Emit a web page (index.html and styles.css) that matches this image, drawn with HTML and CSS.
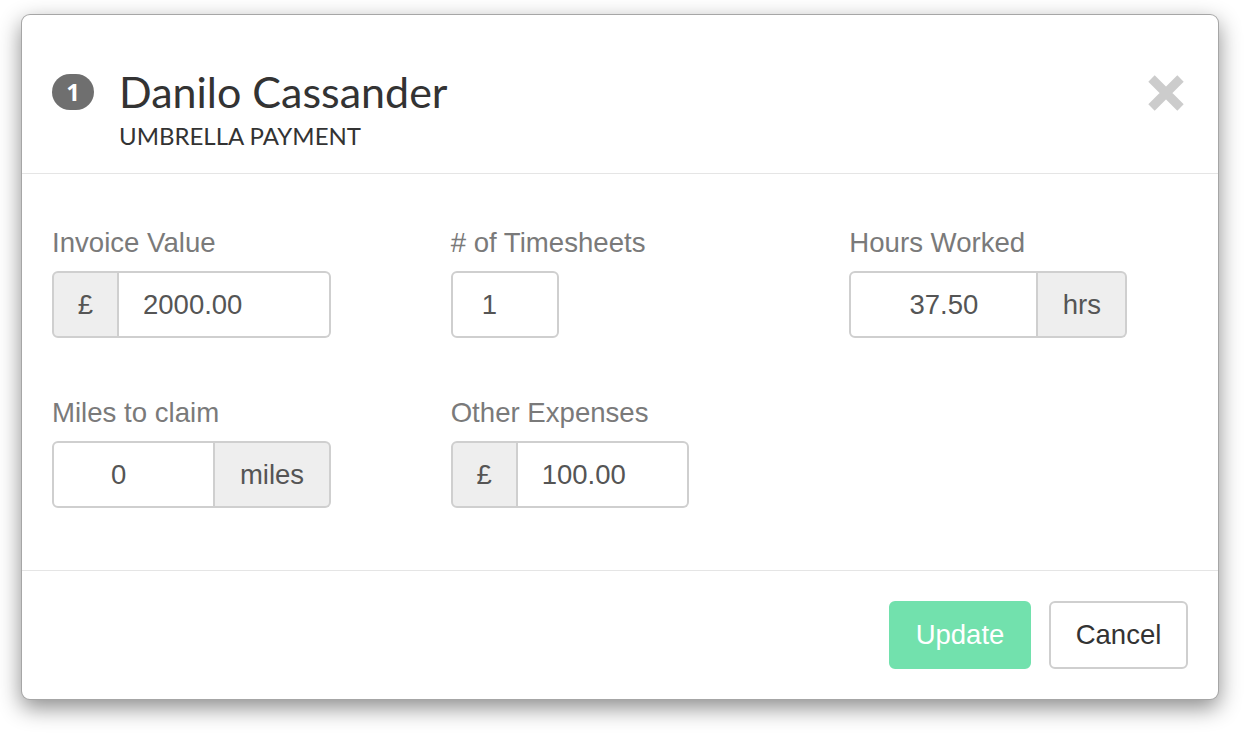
FILE: index.html
```html
<!DOCTYPE html>
<html>
<head>
<meta charset="utf-8">
<link rel="stylesheet" href="styles.css">
</head>
<body>
<div class="modal">
  <div class="modal-header">
    <span class="badge">1</span>
    <div class="titles">
      <h1 class="title">Danilo Cassander</h1>
      <div class="subtitle">UMBRELLA PAYMENT</div>
    </div>
    <button class="close" aria-label="Close">
      <svg width="36" height="36" viewBox="0 0 36 36"><path d="M3.5 3.5 L32.5 32.5 M32.5 3.5 L3.5 32.5" stroke="#cccccc" stroke-width="9" fill="none"/></svg>
    </button>
  </div>
  <div class="modal-body">
    <div class="grid">
      <div class="field">
        <label class="label">Invoice Value</label>
        <div class="group w-invoice">
          <span class="addon addon-left">£</span>
          <input class="input pad-left" type="text" value="2000.00">
        </div>
      </div>
      <div class="field">
        <label class="label"># of Timesheets</label>
        <div class="group w-timesheets">
          <input class="input solo pad-ts" type="text" value="1">
        </div>
      </div>
      <div class="field">
        <label class="label">Hours Worked</label>
        <div class="group w-hours">
          <input class="input centered" type="text" value="37.50">
          <span class="addon addon-right w-hrs">hrs</span>
        </div>
      </div>
      <div class="field">
        <label class="label">Miles to claim</label>
        <div class="group w-miles">
          <input class="input pad-miles" type="text" value="0">
          <span class="addon addon-right w-milesaddon">miles</span>
        </div>
      </div>
      <div class="field">
        <label class="label">Other Expenses</label>
        <div class="group w-other">
          <span class="addon addon-left">£</span>
          <input class="input pad-left" type="text" value="100.00">
        </div>
      </div>
    </div>
  </div>
  <div class="modal-footer">
    <button class="btn btn-update">Update</button>
    <button class="btn btn-cancel">Cancel</button>
  </div>
</div>
</body>
</html>
```
FILE: styles.css
```css
html, body {
  margin: 0;
  padding: 0;
  background: #ffffff;
}
body {
  font-family: "Liberation Sans", Arial, sans-serif;
  min-height: 733px;
  overflow: hidden;
}
.modal {
  margin: 14px 0 0 21px;
  width: 1198px;
  box-sizing: border-box;
  background: #fff;
  border: 1px solid rgba(0,0,0,0.35);
  border-radius: 9px;
  box-shadow: 0 8px 22px rgba(0,0,0,0.45);
}
.modal-header {
  display: flex;
  align-items: flex-start;
  padding: 58px 33px 0 30px;
  height: 159px;
  box-sizing: border-box;
  border-bottom: 1px solid #e5e5e5;
}
.badge {
  flex: none;
  width: 42px;
  height: 36px;
  border-radius: 18px;
  background: #6f6f6f;
  color: #fff;
  font-family: "Open Sans", sans-serif;
  font-weight: 700;
  font-size: 24px;
  line-height: 36px;
  text-align: center;
  margin-top: 1px;
}
.titles {
  flex: 1;
  margin-left: 25px;
}
.title {
  margin: 0;
  font-family: "Lato", sans-serif;
  font-weight: 400;
  font-size: 43px;
  line-height: 38px;
  color: #333;
}
.subtitle {
  margin-top: 12px;
  font-family: "Lato", sans-serif;
  font-size: 24px;
  line-height: 26px;
  color: #333;
}
.close {
  flex: none;
  background: none;
  border: 0;
  padding: 0;
  margin-top: 2px;
  margin-right: 1px;
  width: 36px;
  height: 36px;
  cursor: pointer;
}
.close svg { display: block; }
.modal-body {
  padding: 50px 0 6px 0;
}
.grid {
  display: grid;
  grid-template-columns: repeat(3, 1fr);
}
.field {
  padding: 0 30px;
  margin-bottom: 56px;
}
.label {
  display: block;
  font-size: 27.6px;
  line-height: 38px;
  color: #7a7a7a;
  margin-bottom: 9px;
}
.group {
  display: flex;
  height: 67px;
}
.w-invoice { width: 279px; }
.w-timesheets { width: 108px; }
.w-hours { width: 278px; }
.w-miles { width: 279px; }
.w-other { width: 238px; }
.addon {
  flex: none;
  box-sizing: border-box;
  height: 67px;
  background: #eeeeee;
  border: 2px solid #cfcfcf;
  color: #555;
  font-size: 27.5px;
  line-height: 63px;
  text-align: center;
}
.addon-left {
  width: 67px;
  border-radius: 6px 0 0 6px;
}
.addon-left + .input {
  border-left: 0;
  border-radius: 0 6px 6px 0;
}
.addon-right {
  border-left: 0;
  border-radius: 0 6px 6px 0;
}
.w-hrs { width: 89px; }
.w-milesaddon { width: 116px; }
.input {
  flex: 1;
  min-width: 0;
  box-sizing: border-box;
  height: 67px;
  border: 2px solid #cfcfcf;
  border-radius: 6px 0 0 6px;
  background: #fff;
  color: #555;
  font-family: "Liberation Sans", Arial, sans-serif;
  font-size: 27.5px;
  padding: 0 10px 0 24px;
  outline: none;
}
.input.solo { border-radius: 6px; }
.pad-ts { padding-left: 29px; }
.pad-miles { padding-left: 57px; }
.centered { text-align: center; padding: 0 10px; }
.modal-footer {
  display: flex;
  justify-content: flex-end;
  gap: 18px;
  padding: 30px 30px 30px 30px;
  border-top: 1px solid #e5e5e5;
}
.btn {
  height: 68px;
  box-sizing: border-box;
  font-family: "Liberation Sans", Arial, sans-serif;
  font-size: 27.5px;
  border-radius: 6px;
  cursor: pointer;
}
.btn-update {
  width: 142px;
  background: #72e1ad;
  border: 2px solid #72e1ad;
  color: #fff;
}
.btn-cancel {
  width: 139px;
  background: #fff;
  border: 2px solid #cfcfcf;
  color: #333;
}
```
